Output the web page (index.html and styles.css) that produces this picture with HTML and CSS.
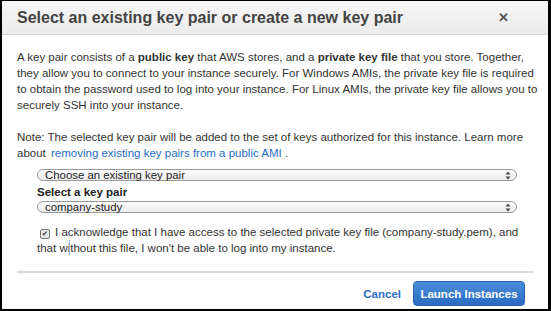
FILE: index.html
```html
<!DOCTYPE html>
<html lang="en">
<head>
    <meta charset="UTF-8">
    <title>Select key pair</title>
    <link rel="stylesheet" href="styles.css">
</head>
<body>
    <div class="dialog">
        <div class="dialog-header">
            <div class="dialog-title">Select an existing key pair or create a new key pair</div>
            <div class="dialog-close">&#x2715;</div>
        </div>
        <div class="dialog-body">
            <p>A key pair consists of a <b>public key</b> that AWS stores, and a <b>private key file</b> that you store. Together,<br>
               they allow you to connect to your instance securely. For Windows AMIs, the private key file is required<br>
               to obtain the password used to log into your instance. For Linux AMIs, the private key file allows you to<br>
               securely SSH into your instance.</p>
            <p class="note">Note: The selected key pair will be added to the set of keys authorized for this instance. Learn more<br>
               about <a class="link">removing existing key pairs from a public AMI</a> .</p>
            <div class="form">
                <div class="select">
                    <span>Choose an existing key pair</span>
                    <svg class="arrows" width="6" height="9" viewBox="0 0 6 9"><path d="M3 0.5 L5.5 3.5 H0.5 Z M3 8.5 L5.5 5.5 H0.5 Z" fill="#444"/></svg>
                </div>
                <div class="label">Select a key pair</div>
                <div class="select">
                    <span>company-study</span>
                    <svg class="arrows" width="6" height="9" viewBox="0 0 6 9"><path d="M3 0.5 L5.5 3.5 H0.5 Z M3 8.5 L5.5 5.5 H0.5 Z" fill="#444"/></svg>
                </div>
                <div class="ack">
                    <span class="check">&#x2714;</span>I acknowledge that I have access to the selected private key file (company-study.pem), and<br>
                    that wi<span class="caret"></span>thout this file, I won't be able to log into my instance.
                </div>
            </div>
        </div>
        <div class="dialog-footer">
            <a class="cancel">Cancel</a>
            <button class="launch">Launch Instances</button>
        </div>
    </div>
</body>
</html>
```

FILE: styles.css
```css
html, body { margin: 0; padding: 0; }
body { background: #000; padding: 1px 3px 2px 2px; width: 551px; height: 311px; box-sizing: border-box; font-family: "Liberation Sans", Arial, sans-serif; color: #333; }

.dialog { background: #fff; height: 100%; display: flex; flex-direction: column; }

.dialog-header { height: 33px; display: flex; align-items: center; justify-content: space-between; padding: 0 39px 0 15px; background: linear-gradient(#f7f7f7, #ebebeb); border-bottom: 1px solid #d4d4d4; }
.dialog-title { font-size: 16px; font-weight: bold; color: #444; }
.dialog-close { font-size: 13px; color: #555; font-weight: bold; }

.dialog-body { padding: 14px 4px 0 15px; font-size: 11.5px; line-height: 16px; color: #333; }
.dialog-body p { margin: 0 0 16px 0; white-space: nowrap; }
.dialog-body p.note { margin-bottom: 8px; }
.link { color: #1f6ec4; margin-left: 2px; }

.form { padding: 0 27px 0 20px; }
.select { height: 10px; border: 1px solid #999; border-radius: 6px; background: linear-gradient(#fdfdfd, #ececec); display: flex; align-items: center; justify-content: space-between; padding: 0 5px 0 7px; font-size: 11.4px; line-height: 10px; color: #222; }
.arrows { display: block; }
.label { font-weight: bold; font-size: 11.5px; line-height: 16px; margin: 3px 0 1px 0; color: #222; }

.ack { margin-top: 11px; line-height: 16px; color: #333; white-space: nowrap; }
.check { display: inline-block; width: 8px; height: 8px; border: 1px solid #777; border-radius: 2px; background: #e6e6e6; font-size: 7px; line-height: 8px; text-align: center; color: #333; margin: 0 5px 0 3px; vertical-align: 0; }
.caret { display: inline-block; width: 1px; height: 15px; background: #8fb3e6; vertical-align: -3px; margin-left: -1px; }

.dialog-footer { margin: auto 15px 0 15px; border-top: 2px solid #d9d9d9; display: flex; justify-content: flex-end; align-items: center; gap: 12px; padding: 8px 8px 3px 0; }
.cancel { color: #2e6cbf; font-weight: bold; font-size: 11.5px; }
.launch { width: 112px; height: 25px; border: 1px solid #2a62ad; border-radius: 4px; background: linear-gradient(#4a8fdb, #2a6ac0); color: #fff; font-family: "Liberation Sans", Arial, sans-serif; font-weight: bold; font-size: 11.5px; padding: 0; }
```
